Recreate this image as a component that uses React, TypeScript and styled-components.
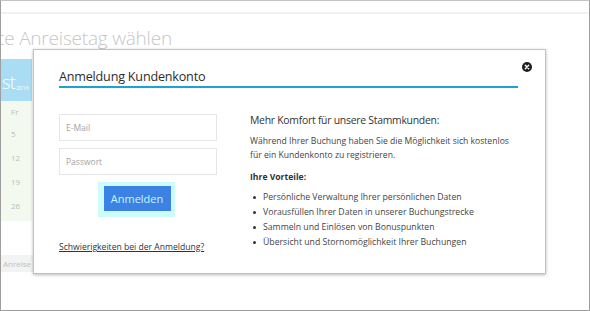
import React from "react";
import styled, { createGlobalStyle } from "styled-components";

const GlobalStyle = createGlobalStyle`
  html, body { margin: 0; padding: 0; background: #ffffff; }
  body { font-family: "Open Sans", "Noto Sans", "Liberation Sans", sans-serif; }
  * { box-sizing: border-box; }
`;

const Frame = styled.div`
  position: relative;
  width: 590px;
  height: 311px;
  border: 1px solid #9e9e9e;
  border-top-color: #c4c4c4;
  background: #ffffff;
  overflow: hidden;
`;

const TopBar = styled.div`
  height: 13px;
  border-bottom: 2px solid #f0f0f0;
  margin-right: 1px;
`;

const PageTitle = styled.h1`
  margin: 10px 0 7px -3px;
  height: 28px;
  font-size: 19px;
  line-height: 28px;
  font-weight: 300;
  letter-spacing: -0.2px;
  color: #c6c6c6;
  white-space: nowrap;
`;

const Calendar = styled.div`
  width: 31px;
  display: flex;
  flex-direction: column;
`;

const MonthHead = styled.div`
  height: 42px;
  background: #a8ddf3;
  color: #ffffff;
  display: flex;
  align-items: flex-end;
  padding: 0 0 9px 1px;
  white-space: nowrap;
`;

const MonthName = styled.span`
  font-size: 18px;
  line-height: 20px;
  font-weight: 300;
  letter-spacing: -0.6px;
`;

const Year = styled.span`
  font-size: 5.5px;
  line-height: 8px;
  margin-left: 1px;
`;

const Days = styled.div`
  background: #f4f9ef;
  padding-bottom: 4px;
`;

const DayCell = styled.div<{ $h: number }>`
  height: ${(p) => p.$h}px;
  display: flex;
  align-items: center;
  padding-left: 10px;
  font-size: 8px;
  color: #b9bdb5;
`;

const Spacer = styled.div`
  height: 34px;
`;

const FooterStrip = styled.div`
  height: 17px;
  width: 33px;
  background: #f3f3f3;
  font-size: 8px;
  line-height: 17px;
  color: #c0c0c0;
  padding-left: 2px;
  white-space: nowrap;
  overflow: hidden;
`;

const Modal = styled.div`
  position: absolute;
  left: 32px;
  top: 48px;
  width: 513px;
  height: 225px;
  background: #ffffff;
  border: 1px solid #c2c2c2;
  box-shadow: 0 1px 3px rgba(0, 0, 0, 0.28);
  padding: 0 27px 0 25px;
`;

const ModalHeader = styled.div`
  padding-top: 18px;
  border-bottom: 2px solid #1ca3d4;
`;

const ModalTitle = styled.h2`
  margin: 0;
  font-size: 12.6px;
  line-height: 18px;
  font-weight: 400;
  letter-spacing: -0.2px;
  color: #2c2c2c;
`;

const CloseButton = styled.button`
  position: absolute;
  right: 13px;
  top: 12px;
  width: 10px;
  height: 10px;
  padding: 0;
  border: none;
  background: transparent;
  display: flex;
`;

const Body = styled.div`
  display: grid;
  grid-template-columns: 158px 1fr;
  column-gap: 33px;
  padding-top: 24px;
`;

const LoginColumn = styled.div`
  display: flex;
  flex-direction: column;
  padding-top: 2px;
`;

const Field = styled.input`
  height: 27px;
  width: 100%;
  border: 1px solid #e6e6e6;
  padding: 0 6px;
  font-family: inherit;
  font-size: 8.5px;
  color: #555;
  outline: none;
  & + & { margin-top: 7px; }
  &::placeholder { color: #a3a3a3; }
`;

const SubmitButton = styled.button`
  align-self: center;
  margin-top: 11px;
  width: 67px;
  height: 25px;
  border: none;
  background: #3b82e4;
  color: #c8f6ff;
  font-family: inherit;
  font-size: 11px;
  box-shadow: -1px 1px 0 5px #cdfbfe;
  position: relative;
  left: -1px;
`;

const HelpLink = styled.a`
  margin-top: 30px;
  font-size: 8.6px;
  line-height: 13px;
  color: #333;
  text-decoration: underline;
  white-space: nowrap;
`;

const InfoColumn = styled.div`
  color: #444;
`;

const InfoTitle = styled.h3`
  margin: 0;
  font-size: 10.4px;
  line-height: 16px;
  font-weight: 400;
  letter-spacing: -0.25px;
  color: #333;
`;

const InfoText = styled.p`
  margin: 6px 0 0;
  font-size: 8.6px;
  line-height: 14px;
`;

const BenefitsTitle = styled.p`
  margin: 8px 0 0;
  font-size: 8.6px;
  line-height: 14px;
  font-weight: 700;
  color: #333;
`;

const Benefits = styled.ul`
  list-style: none;
  margin: 6px 0 0;
  padding: 0;
`;

const Benefit = styled.li`
  position: relative;
  padding-left: 13px;
  font-size: 8.7px;
  line-height: 15px;
  &::before {
    content: "";
    position: absolute;
    left: 3px;
    top: 6px;
    width: 3px;
    height: 3px;
    border-radius: 50%;
    background: #333;
  }
`;

const CloseIcon = () => (
  <svg width="10" height="10" viewBox="0 0 10 10">
    <circle cx="5" cy="5" r="5" fill="#1e1e1e" />
    <path d="M3.3 3.3 L6.7 6.7 M6.7 3.3 L3.3 6.7" stroke="#ffffff" strokeWidth="1.4" strokeLinecap="round" />
  </svg>
);

const days = ["5", "12", "19", "26"];

const benefits = [
  "Persönliche Verwaltung Ihrer persönlichen Daten",
  "Vorausfüllen Ihrer Daten in unserer Buchungstrecke",
  "Sammeln und Einlösen von Bonuspunkten",
  "Übersicht und Stornomöglichkeit Ihrer Buchungen",
];

export default function App() {
  return (
    <>
      <GlobalStyle />
      <Frame>
        <TopBar />
        <PageTitle>te Anreisetag wählen</PageTitle>
        <Calendar>
          <MonthHead>
            <MonthName>st</MonthName>
            <Year>2016</Year>
          </MonthHead>
          <Days>
            <DayCell $h={20}>Fr</DayCell>
            {days.map((d) => (
              <DayCell key={d} $h={24}>
                {d}
              </DayCell>
            ))}
          </Days>
          <Spacer />
          <FooterStrip>Anreise</FooterStrip>
        </Calendar>

        <Modal>
          <ModalHeader>
            <ModalTitle>Anmeldung Kundenkonto</ModalTitle>
          </ModalHeader>
          <CloseButton aria-label="Schließen">
            <CloseIcon />
          </CloseButton>
          <Body>
            <LoginColumn>
              <Field type="email" placeholder="E-Mail" />
              <Field type="password" placeholder="Passwort" />
              <SubmitButton>Anmelden</SubmitButton>
              <HelpLink href="#">Schwierigkeiten bei der Anmeldung?</HelpLink>
            </LoginColumn>
            <InfoColumn>
              <InfoTitle>Mehr Komfort für unsere Stammkunden:</InfoTitle>
              <InfoText>
                Während Ihrer Buchung haben Sie die Möglichkeit sich kostenlos
                <br />
                für ein Kundenkonto zu registrieren.
              </InfoText>
              <BenefitsTitle>Ihre Vorteile:</BenefitsTitle>
              <Benefits>
                {benefits.map((b) => (
                  <Benefit key={b}>{b}</Benefit>
                ))}
              </Benefits>
            </InfoColumn>
          </Body>
        </Modal>
      </Frame>
    </>
  );
}
